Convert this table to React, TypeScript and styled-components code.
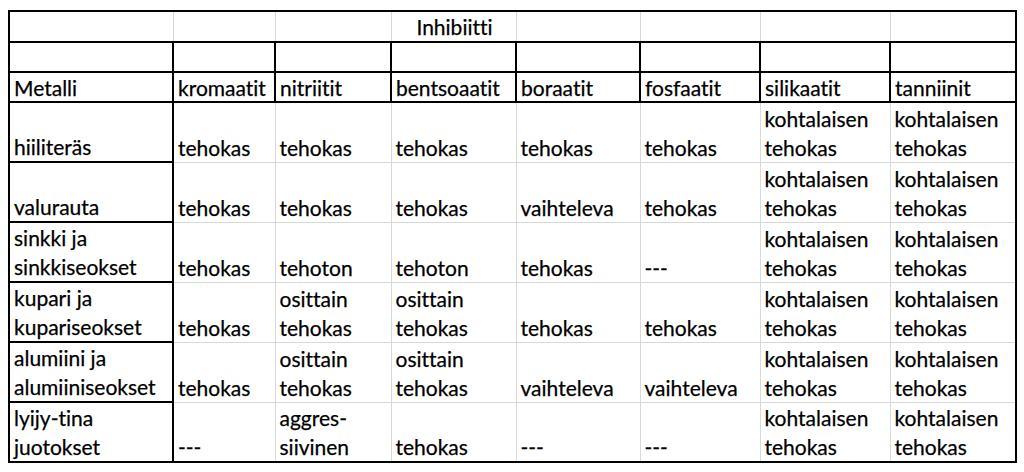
import React from "react";
import styled, { createGlobalStyle } from "styled-components";

const GlobalStyle = createGlobalStyle`
  html, body {
    margin: 0;
    padding: 0;
    background: #ffffff;
  }
  body {
    font-family: Lato, "Open Sans", "Liberation Sans", sans-serif;
    color: #000000;
  }
`;

const columnWidths = [164, 102, 116, 125, 124, 120, 130, 126];

const headers = [
  "Metalli",
  "kromaatit",
  "nitriitit",
  "bentsoaatit",
  "boraatit",
  "fosfaatit",
  "silikaatit",
  "tanniinit",
];

const rows: string[][] = [
  ["hiiliteräs", "tehokas", "tehokas", "tehokas", "tehokas", "tehokas", "kohtalaisen tehokas", "kohtalaisen tehokas"],
  ["valurauta", "tehokas", "tehokas", "tehokas", "vaihteleva", "tehokas", "kohtalaisen tehokas", "kohtalaisen tehokas"],
  ["sinkki ja sinkkiseokset", "tehokas", "tehoton", "tehoton", "tehokas", "---", "kohtalaisen tehokas", "kohtalaisen tehokas"],
  ["kupari ja kupariseokset", "tehokas", "osittain tehokas", "osittain tehokas", "tehokas", "tehokas", "kohtalaisen tehokas", "kohtalaisen tehokas"],
  ["alumiini ja alumiiniseokset", "tehokas", "osittain tehokas", "osittain tehokas", "vaihteleva", "vaihteleva", "kohtalaisen tehokas", "kohtalaisen tehokas"],
  ["lyijy-tina juotokset", "---", "aggres-siivinen", "tehokas", "---", "---", "kohtalaisen tehokas", "kohtalaisen tehokas"],
];

const Sheet = styled.div`
  padding: 10px 0 0 8px;
`;

const Table = styled.table`
  border-collapse: collapse;
  table-layout: fixed;
  width: ${columnWidths.reduce((a, b) => a + b, 0)}px;
  border: 2px solid #000;
  font-size: 21px;
  font-variant-ligatures: none;
  font-feature-settings: "liga" 0, "clig" 0;
  -webkit-text-stroke: 0.25px #000;
`;

const Row = styled.tr<{ $h: number; $thickBottom?: boolean }>`
  height: ${(p) => p.$h}px;
  ${(p) => (p.$thickBottom ? "border-bottom: 2px solid #000;" : "")}
`;

const Cell = styled.td<{ $thick?: boolean; $center?: boolean; $lh: number }>`
  box-sizing: border-box;
  padding: 0 2px 0 4px;
  vertical-align: bottom;
  line-height: ${(p) => p.$lh}px;
  text-align: ${(p) => (p.$center ? "center" : "left")};
  border: ${(p) => (p.$thick ? "2px solid #000" : "1px solid #d9d9d9")};
  overflow: hidden;
  white-space: normal;
`;

export default function App() {
  return (
    <>
      <GlobalStyle />
      <Sheet>
        <Table>
          <colgroup>
            {columnWidths.map((w, i) => (
              <col key={i} style={{ width: w }} />
            ))}
          </colgroup>
          <tbody>
            <Row $h={31} $thickBottom>
              {columnWidths.map((_, i) => (
                <Cell key={i} $lh={28} $center={i === 3}>
                  {i === 3 ? "Inhibiitti" : ""}
                </Cell>
              ))}
            </Row>
            <Row $h={30}>
              {columnWidths.map((_, i) => (
                <Cell key={i} $lh={26} $thick />
              ))}
            </Row>
            <Row $h={30}>
              {headers.map((h) => (
                <Cell key={h} $lh={26} $thick>
                  {h}
                </Cell>
              ))}
            </Row>
            {rows.map((row, r) => (
              <Row key={r} $h={60}>
                {row.map((text, c) => (
                  <Cell key={c} $lh={29} $thick={c === 0}>
                    {text}
                  </Cell>
                ))}
              </Row>
            ))}
          </tbody>
        </Table>
      </Sheet>
    </>
  );
}
